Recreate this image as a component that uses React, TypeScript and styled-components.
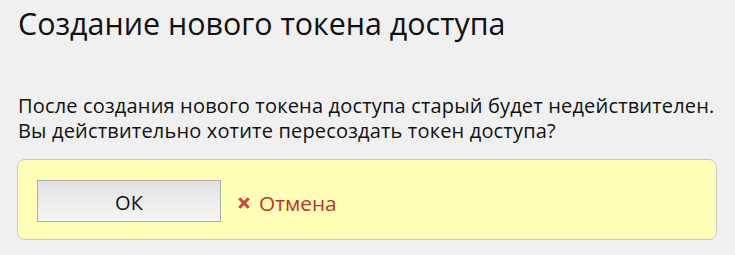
import React from "react";
import styled, { createGlobalStyle } from "styled-components";

const Global = createGlobalStyle`
  html, body { margin: 0; padding: 0; background: #f0f0f0; }
  body { font-family: "Open Sans", "Noto Sans", sans-serif; color: #111; }
`;

const Page = styled.div`
  padding: 0 18px 0 17px;
  display: flex;
  flex-direction: column;
`;

const Title = styled.h1`
  margin: 0;
  padding: 4px 0 0 1px;
  font-family: "Open Sans", sans-serif;
  font-weight: 400;
  font-size: 30.4px;
  line-height: 40px;
  color: #111;
  white-space: nowrap;
`;

const Message = styled.p`
  margin: 49px 0 0 1px;
  font-family: "Open Sans", sans-serif;
  font-size: 20px;
  letter-spacing: 0.17px;
  line-height: 25px;
  color: #111;
  white-space: nowrap;
`;

const ActionBox = styled.div`
  margin-top: 16px;
  height: 81px;
  box-sizing: border-box;
  border: 1px solid #c9c9c0;
  border-radius: 8px;
  background: #ffffb8;
  padding: 20px 19px 0;
  display: flex;
  align-items: flex-start;
  gap: 17px;
`;

const OkButton = styled.button`
  width: 184px;
  height: 42px;
  box-sizing: border-box;
  border: 1px solid #adadad;
  background: linear-gradient(#e2e2e2, #f6f6f6);
  font-family: "Open Sans", sans-serif;
  font-size: 20px;
  color: #111;
  cursor: pointer;
  padding: 2px 0 0;
`;

const CancelLink = styled.a`
  display: flex;
  align-items: center;
  gap: 9px;
  height: 42px;
  padding-top: 3px;
  box-sizing: border-box;
  color: #c0302b;
  font-family: "Open Sans", sans-serif;
  font-size: 20.8px;
  text-decoration: none;
  cursor: pointer;
`;

const Cross = () => (
  <svg width="12" height="12" viewBox="0 0 12 12" aria-hidden>
    <path d="M1.3 1.3 L10.7 10.7 M10.7 1.3 L1.3 10.7" stroke="#cf4039" strokeWidth="3" />
  </svg>
);

export default function App() {
  return (
    <Page>
      <Global />
      <Title>Создание нового токена доступа</Title>
      <Message>
        После создания нового токена доступа старый будет недействителен.
        <br />
        Вы действительно хотите пересоздать токен доступа?
      </Message>
      <ActionBox>
        <OkButton>ОК</OkButton>
        <CancelLink>
          <Cross />
          Отмена
        </CancelLink>
      </ActionBox>
    </Page>
  );
}
